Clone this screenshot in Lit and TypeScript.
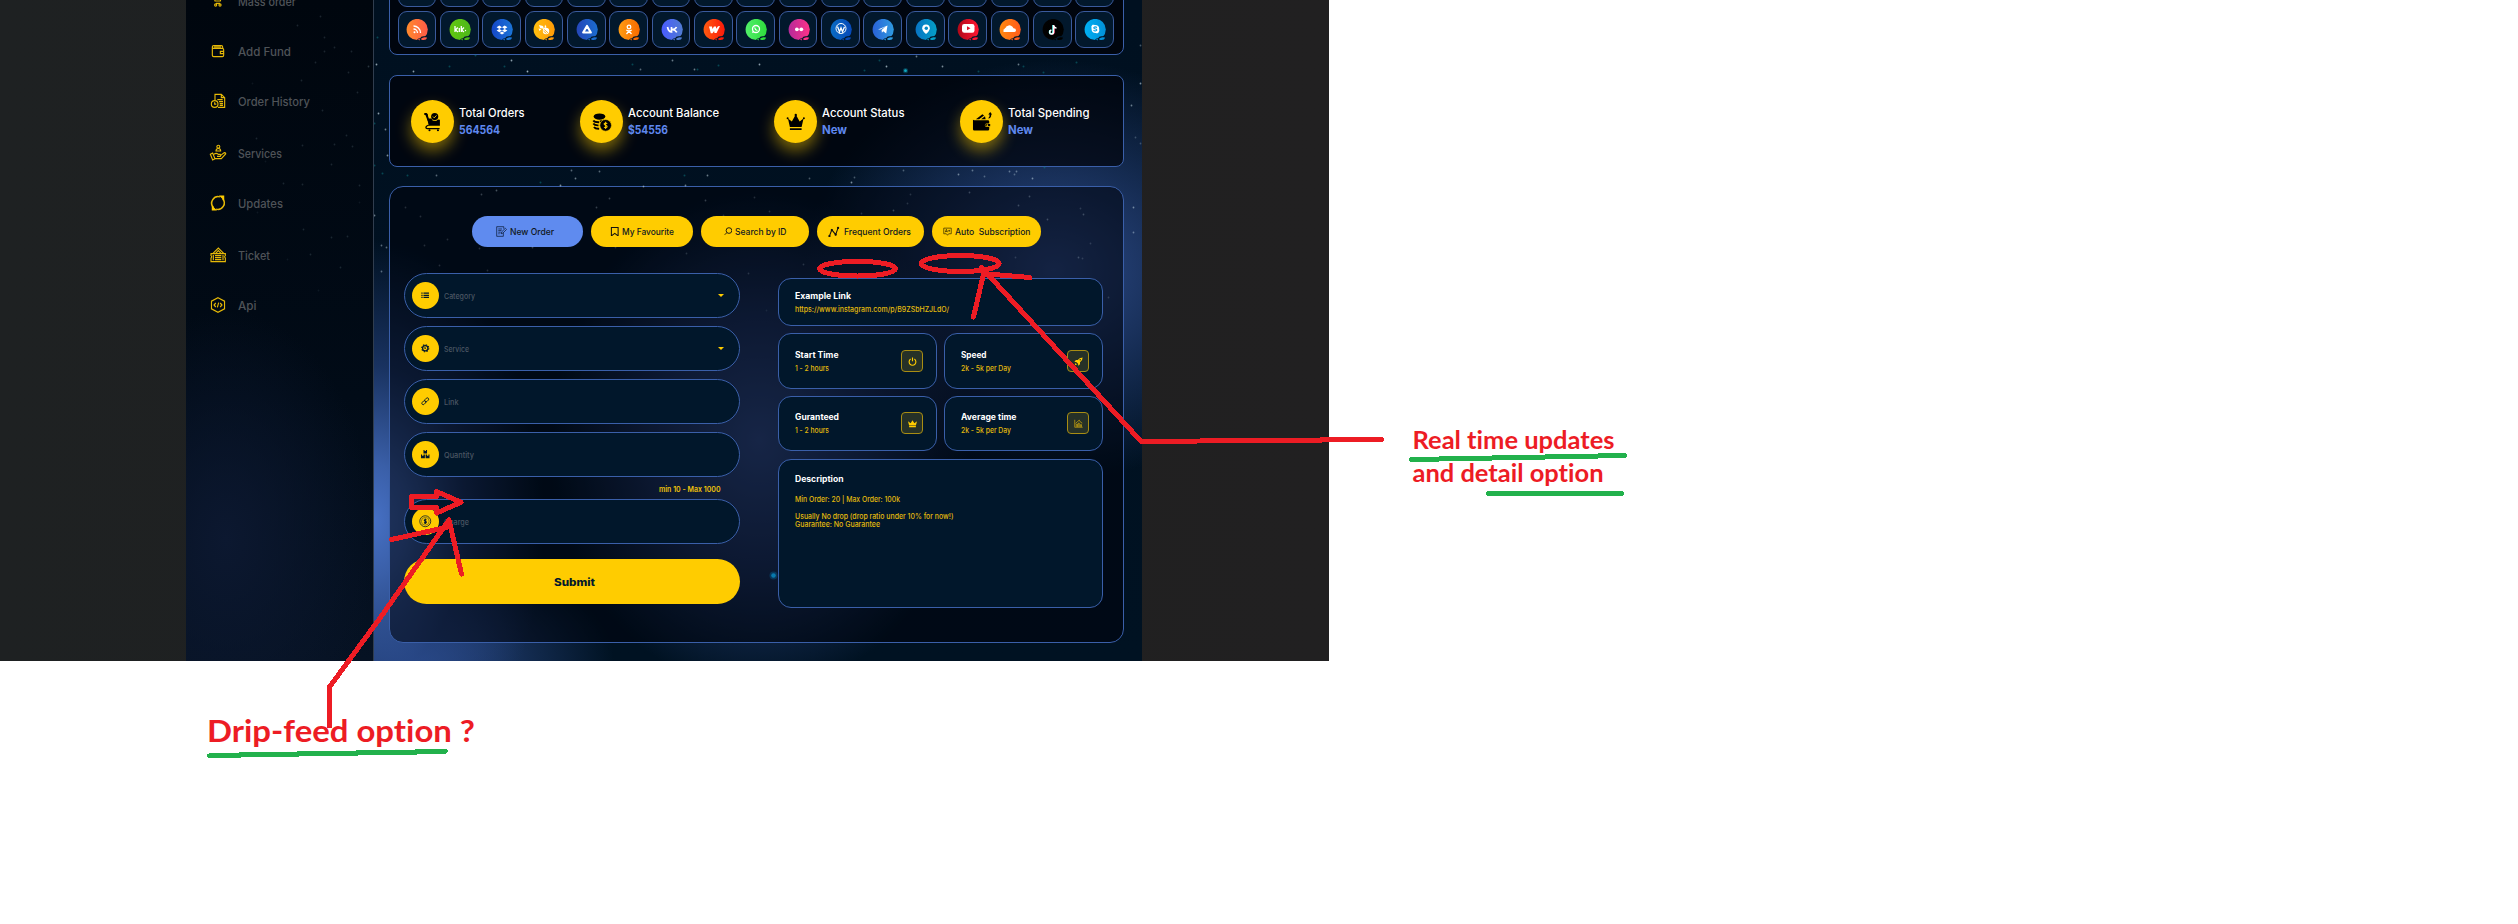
import { LitElement, html, svg, css } from "lit";
import { customElement, property } from "lit/decorators.js";

/** A single line of text whose glyphs are widened or narrowed to span a given width. */
@customElement("fit-text")
class FitText extends LitElement {
  @property({ type: Number }) w = 0;
  static styles = css`
    :host { display: inline-block; white-space: pre; }
    span { display: inline-block; transform-origin: 0 50%; }
  `;
  render() {
    return html`<span><slot></slot></span>`;
  }
  firstUpdated() {
    const span = this.renderRoot.querySelector("span")!;
    const natural = span.getBoundingClientRect().width;
    this.style.width = `${this.w}px`;
    span.style.transform = `scaleX(${this.w / natural})`;
  }
}

const nav = [
  { label: "Mass order", w: 58, cls: "", icon: svg`<path d="M4 2h1.5l2 10h8l2-8H7M9 8h7M9 15.5h6"/><circle cx="8.5" cy="18" r="1.6"/><circle cx="15" cy="18" r="1.6"/><path d="M10 6v4M13 6v4"/>` },
  { label: "Add Fund", w: 53, cls: "", icon: svg`<path d="M3.500 6v12.500q0 2 2 2h13q2 0 2-2V10q0-2-2-2h-13q-2 0-2-2t2-2h11.500q2 0 2 2v2M6 6h10.500M20.500 12.500h-5v3.500h5"/>` },
  { label: "Order History", w: 72, cls: "", icon: svg`<path d="M7.500 10.500V2h9.500l5 5v14.500h-10M17 2v5h5M11 10h8M13.500 13h6M14.500 16h5M14.500 18.500h5"/><circle cx="7" cy="16.500" r="5"/><path d="M7 14v2.700h2.500"/>` },
  { label: "Services", w: 44, cls: "roomy", icon: svg`<circle cx="12.500" cy="2.500" r="2.200"/><path d="M9 9q0-3.700 3.500-3.700T16 9zM.5 14l3.500-2 3.500 8.500-3.500 2zM6 14q3-3 6.500 0h3q1.500 1.500 0 3h-5M15.500 16l6-4.500q2.500 0 2 2l-6.500 7H8"/>` },
  { label: "Updates", w: 45, cls: "", icon: svg`<path stroke-width="2.300" d="M5 18.500A9.700 9.700 0 0 1 15 2.800M19 5.500A9.700 9.700 0 0 1 9 21.200"/><path fill="#ffcc00" stroke="#ffcc00" d="M15.500 1.500h5v5zM8.500 22.500h-5v-5z"/>` },
  { label: "Ticket", w: 32, cls: "roomy", icon: svg`<path d="M1.500 10h21.500v3q-2 1.500 0 3.500V22H1.500v-5.500q2-2 0-3.500zM4.500 9.500l8-8 8 8M8.500 9.500l4-4 4 4M7.500 13h9.500M7.500 16h9.500M7.500 19h9.500M19.500 12v8M5 12v8"/>` },
  { label: "Api", w: 18.5, cls: "", icon: svg`<path d="M12 1l9.800 5.300v11.400L12 23l-9.800-5.300V6.300zM8.700 9l-2.700 3 2.700 3M15.300 9l2.700 3-2.700 3M13 8.500l-2 7"/>` },
];

const W = "#fff";
const socials = [
  { from: "#ff8a2c", to: "#ff5a48", g: svg`<g fill="none" stroke="#fff" stroke-width="1.300"><path d="M7.500 7a7 7 0 0 1 7 7M7.500 10a4 4 0 0 1 4 4"/></g><circle cx="8.500" cy="13.300" r="1" fill=${W}/>` },
  { from: "#63c80f", to: "#4cb81a", g: svg`<g fill="none" stroke="#fff" stroke-width="1.300"><path d="M6 7v6M8.800 8.500L6.500 11l2.500 2M10.300 9v4M12.300 7v6M15 8.500L12.500 11l2.500 2"/></g><circle cx="16.500" cy="11.500" r=".7" fill=${W}/>` },
  { from: "#1547c8", to: "#1b74d6", g: svg`<path fill=${W} d="M8.300 6.500L11 8.200 8.300 9.900 5.600 8.200zM13.700 6.500l2.700 1.700-2.700 1.700L11 8.200zM8.300 9.900l2.700 1.700-2.700 1.600-2.700-1.600zM13.700 9.900l2.700 1.700-2.700 1.600-2.700-1.600zM11 12.600l2.500 1.500L11 15.600l-2.500-1.500z"/>` },
  { from: "#ffbf10", to: "#ff9a06", g: svg`<path fill=${W} d="M6 6l4 1 1 3-4-1zM12 5.500l1.500 2.500-2 1.500zM5.500 9.500l3 .5-2 2z"/><circle cx="13" cy="12" r="3.200" fill=${W}/><path d="M11.200 10.500l4 3.500M10.500 12l3 2.500" stroke="#ffab0a" stroke-width=".9"/>` },
  { from: "#2546b8", to: "#1b6dd0", g: svg`<path fill="none" stroke="#fff" stroke-width="2.200" stroke-linejoin="round" d="M11 7l3.800 6.500H7.200z"/>` },
  { from: "#ff9c12", to: "#f86a00", g: svg`<g fill="none" stroke="#fff" stroke-width="1.300"><circle cx="11" cy="8" r="1.800"/><path d="M8.300 11q2.700 1.700 5.400 0M11 12l-2.500 3M11 12l2.500 3"/></g>` },
  { from: "#4a5cff", to: "#4f7bd0", g: svg`<path fill="none" stroke="#fff" stroke-width="1.700" d="M6.500 8q1 4.700 4 5V8M15.500 8q-1 2.300-4.500 2.500Q14.500 11 15.800 13.300"/>` },
  { from: "#ff5a10", to: "#fc1a0a", g: svg`<path fill=${W} d="M6 7.500h3l.4 2.500L11 7.500h2l.2 2.200L15 7.300l2-.3-3.500 7h-2l-.4-2-1.600 2.300H7.800z"/>` },
  { from: "#52f06a", to: "#2edc3c", g: svg`<circle cx="11" cy="10" r="3.500" fill="none" stroke="#fff" stroke-width="1.300"/><path d="M7 14l.8-2.500 1.700 1.800z" fill=${W}/><path d="M9.700 8.500q.3 2.500 2.700 3" fill="none" stroke="#fff" stroke-width="1.200"/>` },
  { from: "#b52a9a", to: "#ff3288", g: svg`<circle cx="8.900" cy="10.300" r="1.900" fill=${W}/><circle cx="13.300" cy="10.300" r="1.900" fill=${W}/>` },
  { from: "#0a6cc4", to: "#0648b8", g: svg`<circle cx="11" cy="9.500" r="5" fill="none" stroke="#fff" stroke-width="1"/><path fill="none" stroke="#fff" stroke-width="1.300" d="M7.500 7.500l2 5.300 1.500-4 1.500 4 2-5"/>` },
  { from: "#2a62d8", to: "#2e9ae0", g: svg`<path fill=${W} d="M6 10.500l9.500-4-1.300 8-3-2.200-1.300 1.400-.3-2.700 4-3.600-5.200 3.200z"/>` },
  { from: "#0874c4", to: "#04a0c8", g: svg`<path fill=${W} d="M11 5.500a3.800 3.800 0 0 1 3.800 3.800q0 2.700-3.800 5.700-3.800-3-3.800-5.700A3.800 3.800 0 0 1 11 5.500z"/><circle cx="11.300" cy="9.300" r="1.700" fill="#068ac8"/>` },
  { from: "#b00818", to: "#ff1632", g: svg`<rect x="5" y="5" width="12.500" height="8.700" rx="2.300" fill=${W}/><path d="M10 7.200l3.500 2-3.500 2z" fill="#e01028"/>` },
  { from: "#ff8a10", to: "#ff5a1a", g: svg`<path fill=${W} d="M4.500 13v-2.500l1-.5.500-1 1-.5.500-1.200 1-.3q2.500-2 5 .8.800 1.200 1 1.500 2.500 0 2.500 2t-2 1.700z"/>` },
  { from: "#020202", to: "#000", g: svg`<g fill="none" stroke-width="1.500"><path stroke="#3fe" d="M11 6v7a1.800 1.800 0 1 1-2-1.800"/><path stroke="#f36" d="M12 6.500v7a2 2 0 0 1-2 1.500"/><path stroke="#fff" d="M11.500 6v7a1.900 1.900 0 1 1-2-1.800M11.500 6.500q.8 2.500 3 2.500"/></g>` },
  { from: "#00b0f4", to: "#0290d8", g: svg`<path fill=${W} d="M8.500 5.800q1.300-.4 2.500.3 4.300 0 4.200 4.200.8 2.500-1 3.700-1.300.6-2.500-.1-4.200 0-4.200-4.200-.7-2.700 1-3.900z"/><path fill="none" stroke="#06a0e4" stroke-width="1.100" d="M13 8.500q-1.800-1.200-3-.2-.6 1.200 1 1.500 2 .3 1.700 1.500-1.500 1.300-3.200 0"/>` },
];

const stats = [
  { t: "Total Orders", tw: 65.5, w: 66, v: "564564", vw: 41, icon: svg`<path d="M3 2.500h3.500L8.500 10h4.500q1 4 5 4 3 0 5-2.500l3 .5v9H10zM2 1.500h4v3H2z"/><circle cx="18" cy="7" r="5.500"/><path d="M15.300 7l2 2 3.500-3.800" stroke="#ffcc00" stroke-width="1.400" fill="none"/><path d="M9 20q-5 2-4.500 4 0 1.500 2 1.500h19M6 3l4 18" fill="none" stroke="#000" stroke-width="2"/><circle cx="10" cy="28" r="1.600"/><circle cx="23" cy="28" r="1.600"/>` },
  { t: "Account Balance", tw: 91, w: 91, v: "$54556", vw: 40, icon: svg`<ellipse cx="11.500" cy="7" rx="9" ry="4.800"/><path fill="none" stroke="#000" stroke-width="2.800" d="M2 13q2 3 9 2.800M2 17.800q2 3 8 2.700M3 23q2 3 8 2.700M12 14.500q5 0 7-1.800"/><circle cx="21" cy="20.500" r="9" stroke="#ffcc00" stroke-width="1"/><path fill="none" stroke="#ffcc00" stroke-width="1.600" d="M23.500 18q-2.500-2-4.500-.5-1 2 2 3 3 1 2 2.700-2 1.800-4.500 0M21 15v11"/>` },
  { t: "Account Status", tw: 82.500, w: 83, v: "New", vw: 25, icon: svg`<path d="M3 10l6 4.500L15 4l6 10.500 6-4.500-3 13H6zM6 25h18v2.500H6z"/><circle cx="15" cy="4.500" r="1.800"/><circle cx="2.500" cy="9.500" r="1.500"/><circle cx="27.500" cy="9.500" r="1.500"/>` },
  { t: "Total Spending", tw: 81.500, w: 82, v: "New", vw: 25, icon: svg`<path d="M1.500 11.500q0 1 2 1h21q2 0 2 2v3h-4q-2.800 0-2.800 2.700t2.800 2.800h4v3.500q0 2-2 2h-21q-2 0-2-2zM6 11l10-7.500 2.500 2L11 11zM14 11l6-4.500L21 11zM25.500 9q2-1.500 1.500-5h-2l3-4 3 4h-1.500q.5 5-4 6.500z"/><path d="M22 18.300h6v3.700h-6q-1.700 0-1.700-1.800T22 18.300z"/><circle cx="23.500" cy="20.200" r="1.200" fill="#ffcc00"/>` },
];

const tabs = [
  { t: "New Order", tw: 44, w: "t1", iw: 11, icon: svg`<g fill="none" stroke="#0b1a33" stroke-width="1.600"><path d="M16 15v7.500H1.500v-21H17V6M5 6.500h8M5 10h7M5 13.500h5M5 17h3M11 17l1.200-4L20.500 5l2.500 2.500L15 15.500z"/></g>` },
  { t: "My Favourite", tw: 52, w: "t2", iw: 9.500, icon: svg`<path fill="none" stroke="#111" stroke-width="2.600" d="M3.500 1.500h17v21L12 16l-8.500 6.500z"/>` },
  { t: "Search by ID", tw: 51.500, w: "t3", iw: 8.500, icon: svg`<g fill="none" stroke="#111" stroke-width="2.600"><circle cx="14" cy="10" r="8"/><path d="M8 16l-6 6"/></g>` },
  { t: "Frequent Orders", tw: 67, w: "t4", iw: 11.500, icon: svg`<path fill="none" stroke="#111" stroke-width="2.200" d="M3 21L8 8l8 10 5-14"/><g fill="#111"><circle cx="3" cy="21" r="2.400"/><circle cx="8" cy="8.500" r="2.400"/><circle cx="16" cy="18" r="2.400"/><circle cx="21" cy="4" r="2.400"/></g>` },
  { t: "Auto  Subscription", tw: 75.500, w: "t5", iw: 9, icon: svg`<g fill="none" stroke="#3a3000" stroke-width="2"><path d="M2 3h20v15h-7l-3 4-3-4H2zM6 14l3-8 3 8M7 12h4M14 10h5M16.500 7.500v5"/></g>` },
];

const fields = [
  { t: "Category", w: 31, caret: true, icon: svg`<g fill="#02182c"><path d="M7 4h15.500v3.500H7zM7 10.300h15.500v3.500H7zM7 16.500h15.500V20H7zM1 4h3.500v3.500H1zM1 10.300h3.500v3.500H1zM1 16.500h3.500V20H1z"/></g>` },
  { t: "Service", w: 25, caret: true, icon: svg`<g fill="none" stroke="#02182c"><circle cx="12" cy="12" r="7.500" stroke-width="3.500"/><circle cx="12" cy="12" r="10" stroke-width="3" stroke-dasharray="4 3.850"/><path stroke-width="2" d="M10 10l5 5M10.500 13.500a2 2 0 1 1 3-3"/></g>` },
  { t: "Link", w: 14.500, caret: false, icon: svg`<g fill="none" stroke="#02182c" stroke-width="2.500" transform="rotate(-45 12 12)"><rect x="0" y="8.200" width="13" height="7.600" rx="3.800"/><rect x="11" y="8.200" width="13" height="7.600" rx="3.800"/></g>` },
  { t: "Quantity", w: 30, caret: false, icon: svg`<g fill="#02182c"><path d="M7 0h3v3h4V0h3v10H7zM0 13h3v3h4v-3h4v10H0zM13 13h4v3h4v-3h3v10H13z"/></g>` },
  { t: "Charge", w: 25, caret: false, icon: svg`<g fill="none" stroke="#02182c"><circle cx="12" cy="12" r="15.500" stroke-width="2.800" opacity=".8"/><circle cx="12" cy="12" r="11" stroke-width="2" opacity=".6"/><path stroke-width="3" d="M15.500 8.500q-3.500-2.500-6 0-1 2.500 2.500 3.500 4 1 3 3.500-3 2.500-6.500 0M12 4.500v15"/></g>` },
];

const cards = [
  { t: "Start Time", tw: 43.500, s: "1 - 2 hours", sw: 34, icon: svg`<path fill="none" stroke="#ffcc00" stroke-width="3" d="M7 5.500a9 9 0 1 0 10 0M12 1v10"/>` },
  { t: "Speed", tw: 25.500, s: "2k - 5k per Day", sw: 50, icon: svg`<path fill="#ffcc00" d="M23 1q-9 0-13 7H5l-4 5h5l5 5v5l5-4v-5q7-4 7-13zM4 16l4 4-6 2z"/><circle cx="16.500" cy="7.500" r="2" fill="#2a3324"/>` },
  { t: "Guranteed", tw: 44, s: "1 - 2 hours", sw: 34, icon: svg`<path fill="#ffcc00" d="M0 6l7 5 5-8 5 8 7-5-3 11H3zM3 18.500h18V22H3z"/>` },
  { t: "Average time", tw: 55.500, s: "2k - 5k per Day", sw: 50, icon: svg`<g fill="none" stroke="#d9b00c" stroke-width="1.800"><path d="M2 2v20h21M6 21v-7h3v7M11 21V11h3v10M17 21v-6h3v6M4 12l5-5 5-4 4 6 4 2"/></g>` },
];

/* [x, y, brightness] of the faint stars scattered over the backdrop */
const stars: number[][] = [
  [297,25,2],[320,16,2],[324,37,2],[334,47,2],[324,51,2],[315,62,2],[351,51,2],[368,66,3],[348,72,2],[301,80,2],[357,92,2],[322,110,2],[252,83,1],[346,135,2],[302,145,2],[334,144,2],[352,146,2],[331,164,2],[359,185,2],[359,202,1],[283,183,2],[302,184,2],[303,229,2],[331,237,2],[347,236,2],[310,254,2],[287,259,1],[340,267,2],[318,290,1],[256,138,2],[265,161,1],[257,212,1],
  [376,64,8],[378,113,8],[385,129,6],[387,155,7],[374,215,6],[381,245,5],[386,247,5],[381,271,5],
  [413,71,8],[511,60,8],[527,71,9],[672,60,6],[640,69,5],[694,69,6],[571,170,5],[599,171,5],[575,178,6],[436,175,5],[707,175,6],[759,64,8],[916,56,6],[886,66,8],[942,66,7],[1018,64,6],[1140,83,7],[1131,105,6],[1140,45,4],[1135,137,3],[1140,143,3],[972,170,5],[1009,171,5],[1016,171,5],[1014,174,4],[958,174,6],[984,176,4],[1032,178,6],[809,178,4],[854,177,4],[903,170,4],
  [560,185,7],[643,186,6],[685,185,6],[481,194,3],[496,190,4],[405,207,2],[420,216,2],[609,198,3],[596,207,3],[705,200,3],[754,197,2],[723,215,2],[424,245,2],[447,239,2],[479,248,2],[439,265,2],[487,270,2],[532,247,3],[615,247,2],[686,253,2],[748,273,2],[851,182,7],[769,211,2],[969,192,3],[1029,196,3],[1018,205,3],[1047,219,3],[907,203,2],[893,210,3],[861,213,2],[1080,208,2],[1083,214,3],[1078,257,3],[1082,258,2],[1015,257,2],[1133,207,6],[1133,232,5],[1090,243,2],[803,264,2],[1108,297,2],[766,310,1],[910,194,2],
];
const teal = [[377,37],[374,123],[374,165],[449,66],[504,66],[475,55],[632,64],[718,65],[1076,62],[864,70],[978,71],[1043,72],[697,69],[382,173],[407,175],[684,175],[540,182],[879,60],[1023,66],[1044,167]];

@customElement("app-root")
class AppRoot extends LitElement {
  static styles = css`
    :host { display: block; position: relative; width: 2518px; height: 924px; background: #fff; overflow: hidden; font-family: Inter, "Open Sans", sans-serif; }
    * { box-sizing: border-box; }
    svg { display: block; }
    fit-text { flex: none; }
    .stage { width: 1329px; height: 661px; padding-left: 186px; display: flex; overflow: hidden; position: relative;
      background: linear-gradient(90deg, #1e2122, #202020 60%, #212021); }
    .side { width: 188px; height: 661px; border-right: 1px solid #303d4e; z-index: 1;
      background: radial-gradient(150px 230px at 40px 540px, #0c1830, transparent), linear-gradient(#00060e, #010b17 60%, #061223); }
    .nav { display: flex; flex-direction: column; margin: -11px 0 0 24px; gap: 26px; }
    .item { display: flex; align-items: center; height: 24px; gap: 12.500px; color: #4f5358; font-size: 11.500px; font-weight: 500; }
    .item svg { width: 16px; height: 16px; fill: none; stroke: #e6b907; stroke-width: 1.700; overflow: visible; }
    .item fit-text { margin-left: -.5px; padding-top: 1px; }
    .roomy { margin-top: 2px; }
    .main { width: 768px; height: 661px; padding: 0 18px 0 15px; display: flex; flex-direction: column;
      background:
        radial-gradient(170px 280px at 0px 520px, #4670c4 0%, #3a5fa8 20%, rgba(38,68,130,.65) 55%, transparent),
        radial-gradient(210px 250px at 385px 440px, rgba(54,84,150,.95), rgba(44,70,132,.65) 50%, transparent),
        radial-gradient(250px 210px at 680px 270px, rgba(48,78,142,.95), rgba(34,60,112,.65) 50%, transparent),
        radial-gradient(200px 110px at 40px 661px, #2c4c8c, transparent),
        linear-gradient(#001020, #001222); }
    .sky { position: absolute; left: 0; top: 0; }
    .front { z-index: 2; }
    .panel { border: 1px solid #3a5fa9; flex: none; position: relative; }
    .social { height: 95px; margin-top: -40px; border-radius: 8px; background: rgba(0,2,8,.75); padding: 0 9px 6px 7.500px; display: grid;
      grid-template-columns: repeat(17, minmax(0, 1fr)); grid-auto-rows: 37px; gap: 4px 3.600px; align-content: end; }
    .tile { border: 1px solid #3a5a9c; border-radius: 9px; background: #02182c; display: flex; align-items: center; justify-content: center; padding-left: 1px; }
    .tile svg { width: 22px; height: 22px; flex: none; }
    .stats { height: 92px; margin-top: 20px; border-radius: 8px; background: rgba(0,2,8,.66); display: flex; align-items: center; gap: 55px; padding: 1px 0 0 21px; }
    .stat { display: flex; align-items: center; gap: 5px; }
    .disc { width: 43px; height: 43px; border-radius: 50%; background: #ffcc00; display: flex; align-items: center; justify-content: center; box-shadow: 0 8px 15px rgba(255,204,0,.48); }
    .disc svg { width: 19.500px; height: 19.500px; overflow: visible; }
    .lines { display: flex; flex-direction: column; line-height: 17px; font-size: 11.500px; padding-top: 1px; }
    .st { color: #fff; font-weight: 500; }
    .sv { color: #5f88ee; font-weight: 700; }
    .form { height: 457px; margin-top: 19px; border-radius: 14px; background: rgba(0,3,12,.56); padding-top: 29px; }
    .tabs { display: flex; justify-content: center; gap: 8px; }
    .tab { height: 31px; border-radius: 16px; background: #ffcc00; color: #101820; display: flex; align-items: center; justify-content: center; gap: 3px; font-size: 8.800px; font-weight: 500; }
    .t1 { width: 111px; background: #5f8bef; padding-right: 5px; }
    .t2 { width: 102px; } .t3 { width: 108px; }
    .t4 { width: 107px; padding-right: 2px; } .t5 { width: 109px; }
    .t4 { gap: 4px; } .t5 { gap: 3.500px; }
    .cols { display: flex; gap: 38px; padding: 26px 0 0 14px; }
    .left { width: 336px; display: flex; flex-direction: column; gap: 8px; }
    .field { height: 45px; border: 1px solid #3a5fa9; border-radius: 23px; background: #01172b; display: flex; align-items: center; padding: 0 15px 0 7px; gap: 5px; color: #4b5663; font-size: 7.500px; font-weight: 500; }
    .field fit-text { padding-top: 2px; }
    .dot { width: 27px; height: 27px; border-radius: 50%; background: #ffcc00; display: flex; align-items: center; justify-content: center; }
    .dot svg { width: 8.500px; height: 8.500px; overflow: visible; }
    .caret { margin-left: auto; width: 0; border: 3.500px solid transparent; border-top-color: #ffcc00; border-bottom: 0; border-top-width: 3px; }
    .hint { height: 6px; color: #efc20a; font-size: 7.500px; line-height: 10px; font-weight: 600; display: flex; justify-content: flex-end; padding-right: 20px; }
    .submit { height: 45px; margin-top: 7px; border: 0; border-radius: 23px; background: #ffcc00; color: #02182c; display: flex; align-items: center; justify-content: center; font: 800 10px/12px Inter, sans-serif; padding: 1px 0 0; }
    .right { width: 325px; display: grid; grid-template-columns: 159px 159px; grid-template-rows: 48px 56px 55px 149px; column-gap: 7px; row-gap: 7px; padding-top: 5px; align-content: start; }
    .card { border: 1px solid #3a5fa9; border-radius: 13px; background: #01172b; display: flex; padding: 14px 13px 0 16px; justify-content: space-between; }
    .wide { grid-column: span 2; }
    .link { padding-top: 9.500px; }
    .g { padding-top: 13px; }
    .desc { padding-top: 11.500px; margin-top: 1px; height: 149px; }
    .tx { display: flex; flex-direction: column; align-items: flex-start; line-height: 14px; color: #e3ba0b; font-size: 7.500px; font-weight: 500; }
    .tt { color: #fff; font-size: 8.500px; font-weight: 700; }
    .p1 { margin-top: 7px; }
    .p2 { margin-top: 6px; line-height: 8.300px; }
    .p3 { line-height: 8.300px; }
    .badge { width: 22px; height: 22px; border: 1px solid #a88d13; border-radius: 4px; background: #263127; display: flex; align-items: center; justify-content: center; margin-top: 2px; }
    .badge svg { width: 9px; height: 9px; }
    .notes { position: absolute; left: 0; top: 0; z-index: 3; font-family: Lato, "Open Sans", sans-serif; font-weight: 700; font-variant-ligatures: none; }
  `;

  private social(s: (typeof socials)[number], i: number) {
    return html`<div class="tile"><svg viewBox="0 0 22 22">
      <defs><linearGradient id="s${i}"><stop offset="0" stop-color=${s.from}/><stop offset="1" stop-color=${s.to}/></linearGradient></defs>
      <circle cx="11.200" cy="10.500" r="10.600" fill="url(#s${i})"/>${s.g}
      <path d="M10.500 22q1.500-3.500 3.500-2.500 1-2.500 4-2.200 2.500-.500 4 .2l.5 4.500z" fill="#02182c"/>
      <path d="M15 19.700q2-2.200 6-1.200-.5 3.300-5.500 2.300zM11.800 20.300l2.200-.300-.5 1.500z" fill=${s.to}/>
    </svg></div>`;
  }

  render() {
    return html`
      <div class="stage">
        <nav class="side"><div class="nav">
          ${nav.map((n) => html`<div class="item ${n.cls}"><svg viewBox="0 0 24 24">${n.icon}</svg><fit-text .w=${n.w}>${n.label}</fit-text></div>`)}
        </div></nav>
        <main class="main">
          <section class="panel social">
            ${socials.map(() => html`<div class="tile"></div>`)}
            ${socials.map((s, i) => this.social(s, i))}
          </section>
          <section class="panel stats">
            ${stats.map((s) => html`<div class="stat"><div class="disc"><svg viewBox="0 0 30 30">${s.icon}</svg></div>
              <div class="lines" style="width:${s.w}px"><fit-text class="st" .w=${s.tw}>${s.t}</fit-text><fit-text class="sv" .w=${s.vw}>${s.v}</fit-text></div></div>`)}
          </section>
          <section class="panel form">
            <div class="tabs">
              ${tabs.map((t) => html`<div class="tab ${t.w}"><svg viewBox="0 0 24 24" width=${t.iw} height=${t.iw}>${t.icon}</svg><fit-text .w=${t.tw}>${t.t}</fit-text></div>`)}
            </div>
            <div class="cols">
              <div class="left">
                ${fields.map((f, i) => html`${i === 4 ? html`<div class="hint"><fit-text .w=${61.5}>min 10 - Max 1000</fit-text></div>` : ""}
                  <div class="field"><span class="dot"><svg viewBox="0 0 24 24">${f.icon}</svg></span><fit-text .w=${f.w}>${f.t}</fit-text>${f.caret ? html`<i class="caret"></i>` : ""}</div>`)}
                <button class="submit"><fit-text .w=${41}>Submit</fit-text></button>
              </div>
              <div class="right">
                <div class="card wide link"><div class="tx"><fit-text class="tt" .w=${56}>Example Link</fit-text><fit-text .w=${154}>https://www.instagram.com/p/B9ZSbHZJLdO/</fit-text></div></div>
                ${cards.map((c, i) => html`<div class="card ${i > 1 ? "g" : ""}"><div class="tx"><fit-text class="tt" .w=${c.tw}>${c.t}</fit-text><fit-text .w=${c.sw}>${c.s}</fit-text></div>
                  <div class="badge"><svg viewBox="0 0 24 24">${c.icon}</svg></div></div>`)}
                <div class="card wide desc"><div class="tx">
                  <fit-text class="tt" .w=${48.5}>Description</fit-text>
                  <fit-text class="p1" .w=${105}>Min Order: 20 | Max Order: 100k</fit-text>
                  <fit-text class="p2" .w=${158.5}>Usually No drop (drop ratio under 10% for now!)</fit-text>
                  <fit-text class="p3" .w=${85}>Guarantee: No Guarantee</fit-text>
                </div></div>
              </div>
            </div>
          </section>
        </main>
        <svg class="sky" width="1142" height="661">
          ${stars.filter((s) => s[0] > 373).map((s) => svg`<circle cx=${s[0] + 0.5} cy=${s[1] + 0.5} r=".9" fill="#cfe4ee" opacity=${s[2] / 12}/>`)}
          ${teal.map((s) => svg`<circle cx=${s[0] + 0.5} cy=${s[1] + 0.5} r="1" fill="#0c7c84" opacity=".5"/>`)}
          <circle cx="905.500" cy="70.700" r="2.600" fill="#0a5a70" opacity=".6"/><circle cx="905.500" cy="70.700" r="1.400" fill="#10a8c0"/>
          <circle cx="773.500" cy="575.500" r="4" fill="#075a8c" opacity=".45"/><circle cx="773.500" cy="575.500" r="2.300" fill="#0878ac"/>
        </svg>
        <svg class="sky front" width="373" height="661">
          ${stars.filter((s) => s[0] <= 373).map((s) => svg`<circle cx=${s[0] + 0.5} cy=${s[1] + 0.5} r=".9" fill="#9fc0cc" opacity=${s[2] / 12}/>`)}
        </svg>
      </div>
      <svg class="notes" width="2518" height="924" viewBox="0 0 2518 924">
        <g fill="none" stroke="#ed1c24" stroke-width="5" stroke-linecap="round" stroke-linejoin="round" shape-rendering="crispEdges">
          <ellipse cx="857.500" cy="268.700" rx="38" ry="7.300"/>
          <ellipse cx="960.300" cy="263.500" rx="39" ry="8"/>
          <path d="M981.500 267.500L1141 441.300L1200 441L1202 440.500H1320L1322 439.300H1381.500"/>
          <path d="M984 272L973.500 317M988 274L1030 277.500"/>
          <path d="M411.700 496.500H436.500V491.500L461 502.300L436.500 513V507.500H411.700z"/>
          <path d="M329.500 726V687L380 618L449 520L461.500 574"/>
          <path d="M391.500 539.500L446 527.500"/>
        </g>
        <g fill="none" stroke="#22b14c" stroke-width="4.800" stroke-linecap="round" shape-rendering="crispEdges">
          <path d="M209.500 755.700H239L240 754.500H298L299 753.300H357L358 752.300H416L417 751.300H445.500"/>
          <path d="M1411.500 459.500H1438L1440 458.500H1491L1493 457.500H1544L1546 456.500H1597L1599 455.500H1625"/>
          <path d="M1488 493.500H1621.500"/>
        </g>
        <g fill="#ed1c24">
          <text x="207" y="741.500" font-size="31" textLength="268" lengthAdjust="spacingAndGlyphs">Drip-feed option ?</text>
          <text x="1412.500" y="449" font-size="24.500" textLength="202" lengthAdjust="spacingAndGlyphs">Real time updates</text>
          <text x="1412.500" y="481.700" font-size="24.500" textLength="191" lengthAdjust="spacingAndGlyphs">and detail option</text>
        </g>
      </svg>`;
  }
}
